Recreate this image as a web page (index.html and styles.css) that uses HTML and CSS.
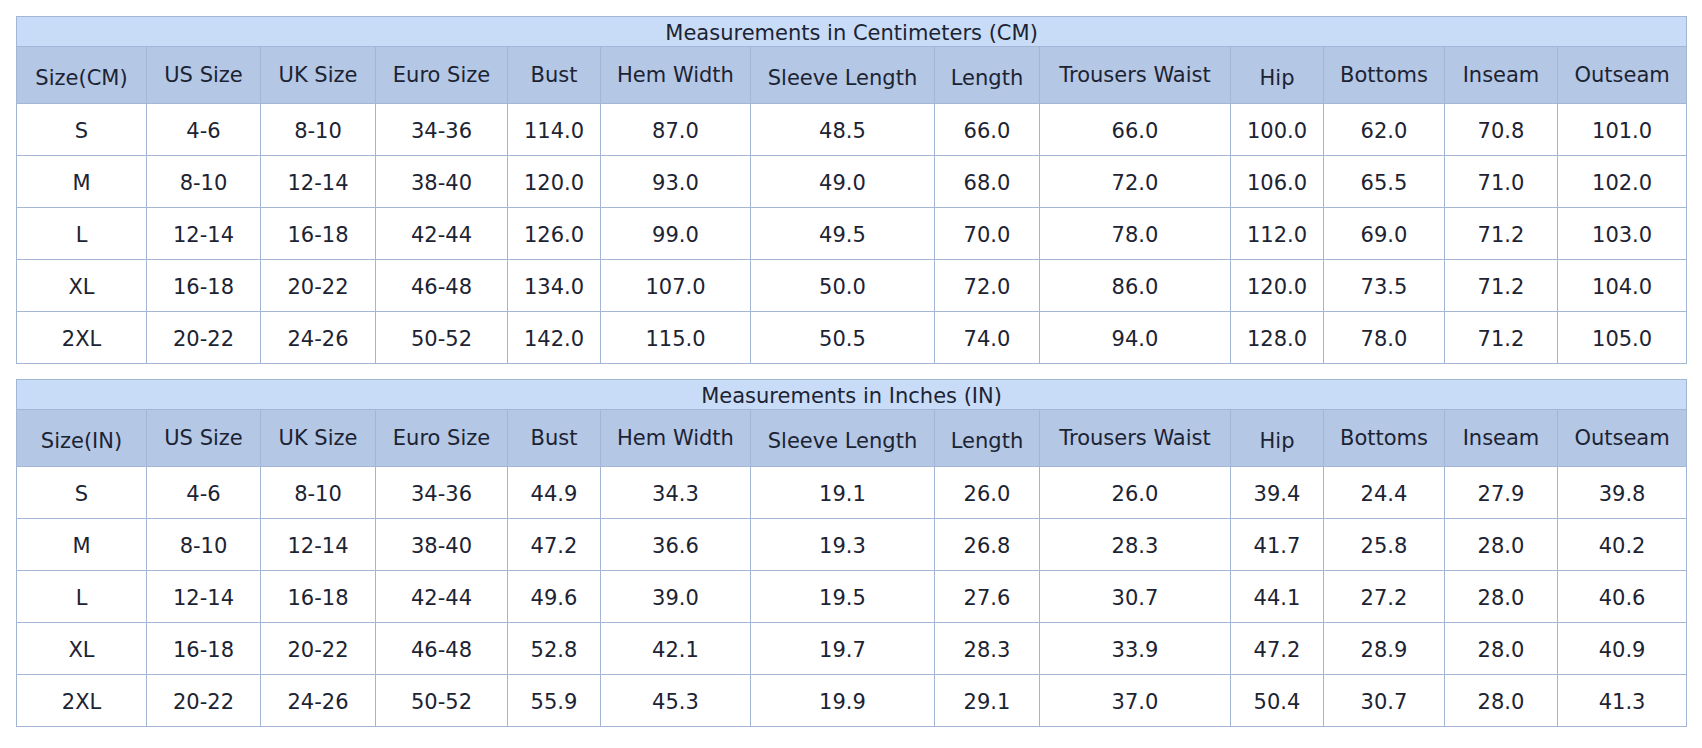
FILE: index.html
```html
<!DOCTYPE html>
<html>
<head>
<meta charset="utf-8">
<link rel="stylesheet" href="styles.css">
</head>
<body>
<table class="chart">
  <colgroup>
    <col class="c1"><col class="c2"><col class="c3"><col class="c4"><col class="c5"><col class="c6"><col class="c7"><col class="c8"><col class="c9"><col class="c10"><col class="c11"><col class="c12"><col class="c13">
  </colgroup>
  <tr class="title"><td colspan="13">Measurements in Centimeters (CM)</td></tr>
  <tr class="head">
    <th class="low">Size(CM)</th><th>US Size</th><th>UK Size</th><th>Euro Size</th><th>Bust</th><th>Hem Width</th><th class="low">Sleeve Length</th><th class="low">Length</th><th>Trousers Waist</th><th class="low">Hip</th><th>Bottoms</th><th>Inseam</th><th>Outseam</th>
  </tr>
  <tr><td>S</td><td>4-6</td><td>8-10</td><td>34-36</td><td>114.0</td><td>87.0</td><td>48.5</td><td>66.0</td><td>66.0</td><td>100.0</td><td>62.0</td><td>70.8</td><td>101.0</td></tr>
  <tr><td>M</td><td>8-10</td><td>12-14</td><td>38-40</td><td>120.0</td><td>93.0</td><td>49.0</td><td>68.0</td><td>72.0</td><td>106.0</td><td>65.5</td><td>71.0</td><td>102.0</td></tr>
  <tr><td>L</td><td>12-14</td><td>16-18</td><td>42-44</td><td>126.0</td><td>99.0</td><td>49.5</td><td>70.0</td><td>78.0</td><td>112.0</td><td>69.0</td><td>71.2</td><td>103.0</td></tr>
  <tr><td>XL</td><td>16-18</td><td>20-22</td><td>46-48</td><td>134.0</td><td>107.0</td><td>50.0</td><td>72.0</td><td>86.0</td><td>120.0</td><td>73.5</td><td>71.2</td><td>104.0</td></tr>
  <tr><td>2XL</td><td>20-22</td><td>24-26</td><td>50-52</td><td>142.0</td><td>115.0</td><td>50.5</td><td>74.0</td><td>94.0</td><td>128.0</td><td>78.0</td><td>71.2</td><td>105.0</td></tr>
</table>
<table class="chart second">
  <colgroup>
    <col class="c1"><col class="c2"><col class="c3"><col class="c4"><col class="c5"><col class="c6"><col class="c7"><col class="c8"><col class="c9"><col class="c10"><col class="c11"><col class="c12"><col class="c13">
  </colgroup>
  <tr class="title"><td colspan="13">Measurements in Inches (IN)</td></tr>
  <tr class="head">
    <th class="low">Size(IN)</th><th>US Size</th><th>UK Size</th><th>Euro Size</th><th>Bust</th><th>Hem Width</th><th class="low">Sleeve Length</th><th class="low">Length</th><th>Trousers Waist</th><th class="low">Hip</th><th>Bottoms</th><th>Inseam</th><th>Outseam</th>
  </tr>
  <tr><td>S</td><td>4-6</td><td>8-10</td><td>34-36</td><td>44.9</td><td>34.3</td><td>19.1</td><td>26.0</td><td>26.0</td><td>39.4</td><td>24.4</td><td>27.9</td><td>39.8</td></tr>
  <tr><td>M</td><td>8-10</td><td>12-14</td><td>38-40</td><td>47.2</td><td>36.6</td><td>19.3</td><td>26.8</td><td>28.3</td><td>41.7</td><td>25.8</td><td>28.0</td><td>40.2</td></tr>
  <tr><td>L</td><td>12-14</td><td>16-18</td><td>42-44</td><td>49.6</td><td>39.0</td><td>19.5</td><td>27.6</td><td>30.7</td><td>44.1</td><td>27.2</td><td>28.0</td><td>40.6</td></tr>
  <tr><td>XL</td><td>16-18</td><td>20-22</td><td>46-48</td><td>52.8</td><td>42.1</td><td>19.7</td><td>28.3</td><td>33.9</td><td>47.2</td><td>28.9</td><td>28.0</td><td>40.9</td></tr>
  <tr><td>2XL</td><td>20-22</td><td>24-26</td><td>50-52</td><td>55.9</td><td>45.3</td><td>19.9</td><td>29.1</td><td>37.0</td><td>50.4</td><td>30.7</td><td>28.0</td><td>41.3</td></tr>
</table>
</body>
</html>
```
FILE: styles.css
```css
html, body {
  margin: 0;
  padding: 0;
  background: #ffffff;
}
body {
  padding: 16px 0 0 16px;
  font-family: "DejaVu Sans", Verdana, sans-serif;
  font-size: 21px;
  color: #1c2333;
}
.chart {
  border-collapse: separate;
  border-spacing: 0;
  table-layout: fixed;
  width: 1671px;
  border-top: 1px solid #a3b6d6;
  border-left: 1px solid #a3b6d6;
}
.chart.second {
  margin-top: 15px;
}
.chart td, .chart th {
  border-right: 1px solid #a3b6d6;
  border-bottom: 1px solid #a3b6d6;
  padding: 0;
  text-align: center;
  vertical-align: middle;
  font-weight: normal;
  white-space: nowrap;
  overflow: hidden;
}
.c1 { width: 130px; }
.c2 { width: 114px; }
.c3 { width: 115px; }
.c4 { width: 132px; }
.c5 { width: 93px; }
.c6 { width: 150px; }
.c7 { width: 184px; }
.c8 { width: 105px; }
.c9 { width: 191px; }
.c10 { width: 93px; }
.c11 { width: 121px; }
.c12 { width: 113px; }
.c13 { width: 129px; }
.title td {
  background: #c9dcf7;
  height: 30px;
  box-sizing: border-box;
  padding-top: 3px;
  line-height: 24px;
}
.head th {
  background: #b4c7e5;
  height: 57px;
  box-sizing: border-box;
  line-height: 24px;
}
.head th.low {
  padding-top: 6px;
}
.chart tr td {
  height: 52px;
  box-sizing: border-box;
  line-height: 24px;
  padding-top: 2px;
}
.chart tr.title td {
  height: 30px;
  padding-top: 3px;
}
```
